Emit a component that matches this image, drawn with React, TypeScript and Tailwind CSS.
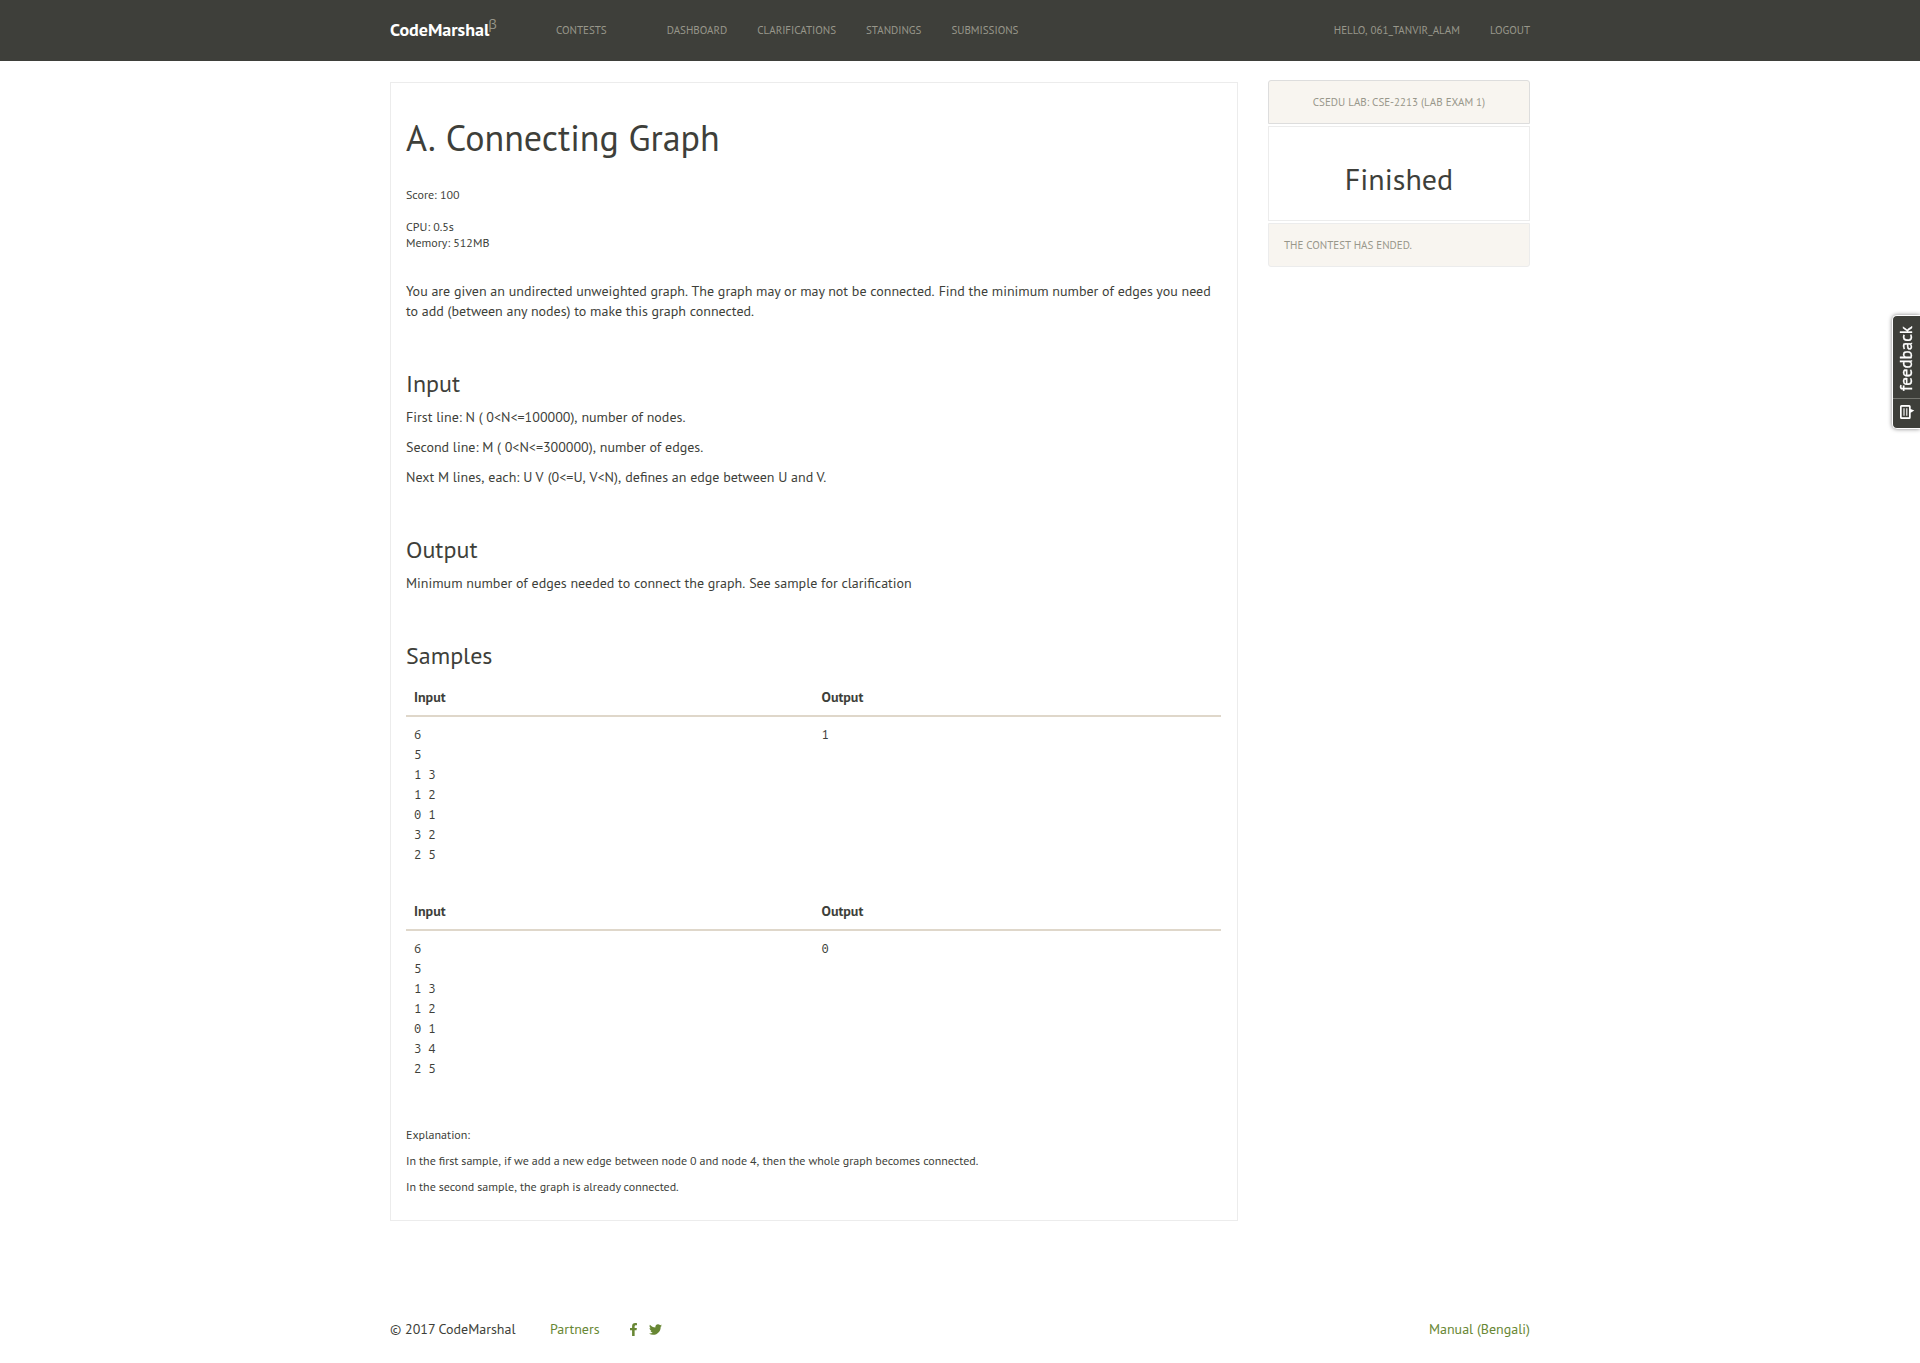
import React from "react";
import { FaFacebookF, FaTwitter } from "react-icons/fa";

const samples = [
  { input: ["6", "5", "1 3", "1 2", "0 1", "3 2", "2 5"], output: "1" },
  { input: ["6", "5", "1 3", "1 2", "0 1", "3 4", "2 5"], output: "0" },
];

function Header() {
  return (
    <header className="h-[61px] bg-[#3e3f3a]">
      <div className="mx-auto flex h-[60px] w-[1140px] items-center text-[11px] text-[#98978b]">
        <div className="flex w-[166px] text-lg font-bold text-white">
          CodeMarshal
          <span className="-mt-[2px] -ml-px text-[13.5px] font-normal text-[#98978b]">β</span>
        </div>
        <nav className="flex gap-[30px]">
          <a className="mr-[30px]">CONTESTS</a>
          <a>DASHBOARD</a>
          <a>CLARIFICATIONS</a>
          <a>STANDINGS</a>
          <a>SUBMISSIONS</a>
        </nav>
        <nav className="ml-auto flex gap-[30px]">
          <a className="[word-spacing:1px]">HELLO, 061_TANVIR_ALAM</a>
          <a>LOGOUT</a>
        </nav>
      </div>
    </header>
  );
}

function Sample({ input, output }: { input: string[]; output: string }) {
  return (
    <div className="leading-5">
      <div className="grid grid-cols-2 border-b-2 border-[#dfd7ca] pb-2 font-bold">
        <div className="pl-2">Input</div>
        <div className="pl-2">Output</div>
      </div>
      <div className="grid grid-cols-2 pt-[7px] pb-px font-['Ubuntu_Mono','Liberation_Mono',monospace] text-[13px] leading-5 tracking-[-0.2px]">
        <pre className="pl-2 font-[inherit]">{input.join("\n")}</pre>
        <pre className="pl-2 font-[inherit]">{output}</pre>
      </div>
    </div>
  );
}

function Problem() {
  return (
    <main className="h-[1139px] w-[848px] border border-[#ececec] pt-[35px] pr-4 pl-[15px]">
      <h1 className="text-4xl leading-10">
        <span className="mr-[0.5px]">A.</span> Connecting Graph
      </h1>
      <div className="mt-[29px] text-xs leading-4">
        <p>Score: 100</p>
        <p className="mt-4">CPU: 0.5s</p>
        <p>Memory: 512MB</p>
      </div>
      <p className="mt-[30px]">
        You are given an undirected unweighted <span className="mr-[0.3px]">graph.</span> The graph may or may not be <span className="mr-[0.3px]">connected.</span> Find the minimum number of edges you need to add (between any nodes) to make this graph connected.
      </p>

      <h2 className="mt-[50px] text-2xl leading-[26px]">Input</h2>
      <div className="mt-[10px] space-y-[10px]">
        <p>
          First line: N ( 0&lt;N&lt;=100000)<span className="mr-[0.2px]">,</span> number of nodes.
        </p>
        <p>
          Second line: M ( 0&lt;N&lt;=300000)<span className="mr-[0.2px]">,</span> number of edges.
        </p>
        <p>
          Next M lines<span className="mr-[0.2px]">,</span> each: U <span className="mr-[0.4px]">V</span> (0&lt;=U<span className="mr-[0.6px]">,</span> V&lt;N)<span className="mr-[0.4px]">,</span> defines an edge between U and V.
        </p>
      </div>

      <h2 className="mt-[50px] text-2xl leading-[26px]">Output</h2>
      <p className="mt-[10px]">
        Minimum number of edges needed to connect the <span className="mr-[0.2px]">graph.</span> See sample for clarification
      </p>

      <h2 className="mt-[50px] text-2xl leading-[26px]">Samples</h2>
      <div className="mt-[18px] space-y-9">
        {samples.map((s) => (
          <Sample key={s.output} {...s} />
        ))}
      </div>

      <div className="mt-12 space-y-[10px] text-xs leading-4 [word-spacing:-0.24px]">
        <p>Explanation:</p>
        <p>
          In the first sample<span className="mr-[0.2px]">,</span> if we add a new edge between node 0 and node 4<span className="mr-[0.2px]">,</span> then the whole graph becomes connected.
        </p>
        <p>
          In the second sample<span className="mr-[0.2px]">,</span> the graph is already connected.
        </p>
      </div>
    </main>
  );
}

function Sidebar() {
  return (
    <aside className="-mt-[2px] flex w-[262px] flex-col gap-[2px] text-[11px] text-[#98978b]">
      <div className="flex h-11 items-center justify-center rounded-t-[3px] border border-[#dddddd] bg-[#f8f5f0]">
        CSEDU LAB: CSE-2213 (LAB EXAM 1)
      </div>
      <div className="h-[95px] border border-[#ececec] pt-[35px] text-center text-3xl leading-[33px] text-[#3e3f3a]">
        Finished
      </div>
      <div className="flex h-11 items-center rounded-b-[3px] border border-[#ececec] bg-[#f8f5f0] px-[15px]">
        THE CONTEST HAS ENDED.
      </div>
    </aside>
  );
}

function FeedbackTab() {
  return (
    <div className="fixed top-[315px] right-0 flex h-[114px] w-7 flex-col items-center rounded-l-[5px] border border-r-0 border-white bg-[#3e3f3a] text-white shadow-[0_0_4px_rgba(0,0,0,0.5)]">
      <div className="flex h-[83px] w-full items-center justify-center border-b border-[#74756f] pt-[3px] pr-[1px]">
        <span className="rotate-180 text-[17px] leading-none [-webkit-text-stroke:0.3px_white] [writing-mode:vertical-rl]">
          feedback
        </span>
      </div>
      <svg className="mt-[5px] ml-px h-4 w-4" viewBox="0 0 16 16" fill="none">
        <path d="M2.5 1h7.7q1.5 0 1.5 1.5V5L15.300 6.500 11.700 8.700V13.500q0 1.500-1.500 1.500H2.500Q1 15 1 13.500v-11Q1 1 2.500 1Z" fill="white" />
        <rect x="2.700" y="2.800" width="7.300" height="10.400" fill="#3e3f3a" />
        <path d="M5 4.300v7.400M7.800 4.300v7.400" stroke="white" strokeWidth="1.100" />
      </svg>
    </div>
  );
}

export default function App() {
  return (
    <div className="min-h-[1363px] bg-white font-['PT_Sans','Open_Sans',sans-serif] text-sm leading-5 text-[#3e3f3a]">
      <Header />
      <div className="mx-auto mt-[21px] flex w-[1140px] items-start justify-between">
        <Problem />
        <Sidebar />
      </div>
      <footer className="mx-auto mt-[98px] flex h-5 w-[1140px] items-center text-[#688734]">
        <span className="w-[160px] text-[#3e3f3a]">© 2017 CodeMarshal</span>
        <a>Partners</a>
        <FaFacebookF className="ml-[27px] h-[13px] w-[13px]" />
        <FaTwitter className="ml-[9px] h-[13px] w-[13px]" />
        <a className="ml-auto">Manual (Bengali)</a>
      </footer>
      <FeedbackTab />
    </div>
  );
}
